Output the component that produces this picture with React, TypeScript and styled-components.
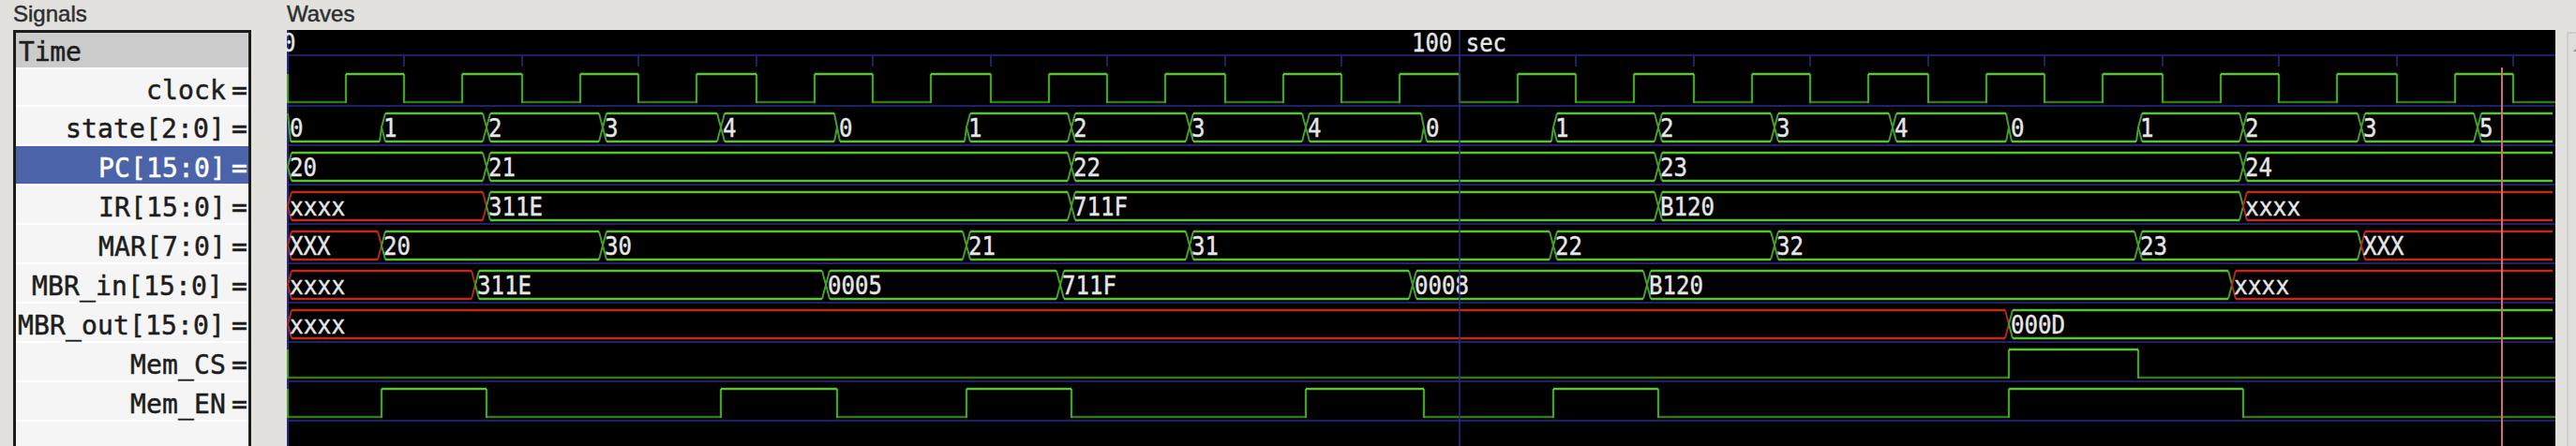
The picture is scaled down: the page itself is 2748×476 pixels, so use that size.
import React from "react";
import styled, { createGlobalStyle } from "styled-components";

const GlobalStyle = createGlobalStyle`
  html, body, #root { margin: 0; height: 100%; }
  body { background: #e2e1dd; overflow: hidden; }
`;

const mono = `"DejaVu Sans Mono", "Liberation Mono", monospace`;

const Viewer = styled.div`
  display: flex;
  width: 2748px;
  height: 476px;
  overflow: hidden;
  background: #e2e1dd;
`;

const Frame = styled.section<{ $width: number; $before: number }>`
  flex: none;
  display: flex;
  flex-direction: column;
  width: ${(p) => p.$width}px;
  margin-left: ${(p) => p.$before}px;
`;

const FrameTitle = styled.h2`
  flex: none;
  margin: 0;
  height: 32px;
  font: 400 24px/30px "Liberation Sans", Arial, sans-serif;
  -webkit-text-stroke: 0.5px #2e2f30;
  color: #2e2f30;
`;

const SignalList = styled.div`
  flex: 1;
  box-sizing: border-box;
  border: solid #1c1c1c;
  border-width: 3px 3px 0;
  background: #f5f5f5;
  overflow: hidden;
`;

const TimeHeader = styled.div`
  box-sizing: border-box;
  height: 39px;
  padding-left: 3px;
  border-bottom: 2px solid #fff;
  background: #cbcbcb;
  font: 28px/42px ${mono};
  letter-spacing: -0.2px;
  -webkit-text-stroke: 0.5px #1d1d1d;
  color: #1d1d1d;
`;

const SignalRow = styled.div<{ $selected?: boolean }>`
  box-sizing: border-box;
  display: flex;
  justify-content: flex-end;
  height: 42px;
  border-bottom: 2px solid #fff;
  background: ${(p) => (p.$selected ? "#4b64a9" : "#f5f5f5")};
  color: ${(p) => (p.$selected ? "#fff" : "#1d1d1d")};
  font: 28px/48px ${mono};
  letter-spacing: 0.15px;
  -webkit-text-stroke: 0.5px currentColor;
  white-space: nowrap;
  &:nth-child(2) {
    height: 40px;
    line-height: 45px;
  }
`;

const SignalName = styled.span<{ $inset?: number }>`
  margin-right: ${(p) => 6 + (p.$inset ?? 0)}px;
`;

const Equals = styled.span`
  flex: none;
  width: 18px;
  overflow: hidden;
`;

const WaveCanvas = styled.svg`
  display: block;
  width: 2420px;
  height: 444px;
  background: #000;
`;

const ValueText = styled.text`
  font: 26px ${mono};
  fill: #e6e6e6;
  stroke: #e6e6e6;
  stroke-width: 0.4px;
`;

const Scroller = styled.div`
  flex: 1;
  box-sizing: border-box;
  margin: 34px 0 0 12px;
  padding: 14px 0 0 5px;
  border: solid #cfceca;
  border-width: 2px 0 0 2px;
  background: #dfdeda;
  overflow: hidden;
`;

const ScrollArrow = styled.svg`
  display: block;
  width: 10px;
  height: 6px;
  fill: #8a8985;
`;

type Change = [number, string];
type Signal =
  | { name: string; kind: "bit"; high: [number, number][]; selected?: boolean; inset?: number }
  | { name: string; kind: "bus"; values: Change[]; selected?: boolean; inset?: number };

const clockHigh = Array.from({ length: 19 }, (_, i): [number, number] => [i * 10 + 5, i * 10 + 10]);

const signals: Signal[] = [
  { name: "clock", kind: "bit", high: clockHigh },
  {
    name: "state[2:0]",
    kind: "bus",
    inset: 1,
    values: [
      [0, "0"], [8, "1"], [17, "2"], [27, "3"], [37, "4"], [47, "0"], [58, "1"], [67, "2"], [77, "3"],
      [87, "4"], [97, "0"], [108, "1"], [117, "2"], [127, "3"], [137, "4"], [147, "0"], [158, "1"],
      [167, "2"], [177, "3"], [187, "5"],
    ],
  },
  { name: "PC[15:0]", kind: "bus", selected: true, values: [[0, "20"], [17, "21"], [67, "22"], [117, "23"], [167, "24"]] },
  { name: "IR[15:0]", kind: "bus", values: [[0, "xxxx"], [17, "311E"], [67, "711F"], [117, "B120"], [167, "xxxx"]] },
  {
    name: "MAR[7:0]",
    kind: "bus",
    values: [[0, "XXX"], [8, "20"], [27, "30"], [58, "21"], [77, "31"], [108, "22"], [127, "32"], [158, "23"], [177, "XXX"]],
  },
  {
    name: "MBR_in[15:0]",
    kind: "bus",
    inset: 3,
    values: [[0, "xxxx"], [16, "311E"], [46, "0005"], [66, "711F"], [96, "0008"], [116, "B120"], [166, "xxxx"]],
  },
  { name: "MBR_out[15:0]", kind: "bus", inset: 1, values: [[0, "xxxx"], [147, "000D"]] },
  { name: "Mem_CS", kind: "bit", high: [[147, 158]] },
  { name: "Mem_EN", kind: "bit", high: [[8, 17], [37, 47], [58, 67], [87, 97], [108, 117], [147, 167]] },
];

const CANVAS_W = 2420;
const BUS_END = 2417;
const GRID = "#20206a";
const GREEN = "#5ac235";
const GREEN_EDGE = "#449f27";
const GREEN_LOW = "#32761d";
const RED = "#c32a1c";

// Simulation time to canvas x, snapped to the 2px grid.
const at = (t: number) => 1 + 2 * Math.floor(6.25 * t);
// Separator line under row i.
const rule = (i: number) => 81 + 42 * i;

function BitWave({ high, row }: { high: [number, number][]; row: number }) {
  const top = rule(row) - 34;
  const low = rule(row) - 4;
  let cursor = 1;
  const lows: string[] = [];
  for (const [a, b] of high) {
    lows.push(`M${cursor} ${low}H${at(a)}`);
    cursor = at(b);
  }
  lows.push(`M${cursor} ${low}H${CANVAS_W}`);
  return (
    <g fill="none" strokeWidth={2.3}>
      <path d={lows.join("")} stroke={GREEN_LOW} />
      <path
        d={`M1 ${top}V${low + 1}` + high.map(([a, b]) => `M${at(a)} ${top}V${low + 1}M${at(b)} ${top}V${low + 1}`).join("")}
        stroke={GREEN_EDGE}
      />
      <path d={high.map(([a, b]) => `M${at(a)} ${top}H${at(b)}`).join("")} stroke={GREEN} />
    </g>
  );
}

const unknown = (v: string) => /^x+$/i.test(v);

function BusWave({ values, row }: { values: Change[]; row: number }) {
  const top = rule(row) - 34;
  const low = rule(row) - 4;
  const mid = (top + low) / 2;
  return (
    <g fill="none" strokeWidth={2.3}>
      {values.map(([t, v], i) => {
        const x0 = at(t);
        const last = i === values.length - 1;
        const x1 = last ? BUS_END : at(values[i + 1][0]);
        const zero = v === "0";
        const color = unknown(v) ? RED : GREEN;
        const edge = unknown(v) ? "#b3271a" : GREEN_EDGE;
        const l = zero ? x0 + 3 : x0 + 4;
        const r = last ? x1 : zero ? x1 - 2 : x1 - 4;
        const topEnd = !last && values[i + 1][1] === "0" ? x1 - 3 : r;
        const rises = zero
          ? `M${x0} ${i === 0 ? top : mid}L${l} ${low}`
          : `M${l} ${top}L${x0} ${mid}L${l} ${low}`;
        const falls = last ? "" : zero ? `M${x1} ${mid}L${r} ${low}` : `M${topEnd} ${top}L${x1} ${mid}L${topEnd} ${low}`;
        return (
          <g key={t}>
            <path d={rises + falls} stroke={edge} strokeWidth={2} />
            <path d={(zero ? "" : `M${l} ${top}H${topEnd}`) + `M${l} ${low}H${topEnd}`} stroke={color} />
            <ValueText
              x={x0 + 2}
              y={low - 4.6}
              textLength={v.length * (v === "xxxx" ? 14.8 : 14.5)}
              lengthAdjust="spacingAndGlyphs"
            >
              {v}
            </ValueText>
          </g>
        );
      })}
    </g>
  );
}

function Waves() {
  return (
    <WaveCanvas viewBox="0 0 2420 444">
      <g fill="none" stroke={GRID} strokeWidth={2}>
        <path d={`M0 27H2420` + signals.map((_, i) => `M0 ${rule(i)}H2420`).join("")} />
        <path d={Array.from({ length: 19 }, (_, i) => `M${at((i + 1) * 10)} 27V39`).join("")} />
        <path d="M1 0V444" stroke="#2a2a86" />
      </g>
      {signals.map((s, i) =>
        s.kind === "bit" ? <BitWave key={s.name} high={s.high} row={i} /> : <BusWave key={s.name} values={s.values} row={i} />
      )}
      <path d={`M${at(100)} 0V444`} stroke="#2a2a86" strokeOpacity={0.75} strokeWidth={2} />
      <ValueText x={-5} y={22.5} textLength={14.5} lengthAdjust="spacingAndGlyphs">0</ValueText>
      <ValueText x={1200} y={22.5} textLength={101} lengthAdjust="spacingAndGlyphs">100 sec</ValueText>
      <path d="M2363 40V444" stroke="#d46e6a" strokeWidth={2} />
    </WaveCanvas>
  );
}

export default function App() {
  return (
    <Viewer>
      <GlobalStyle />
      <Frame $width={254} $before={14}>
        <FrameTitle>Signals</FrameTitle>
        <SignalList>
          <TimeHeader>Time</TimeHeader>
          {signals.map((s) => (
            <SignalRow key={s.name} $selected={s.selected}>
              <SignalName $inset={s.inset}>{s.name}</SignalName>
              <Equals>=</Equals>
            </SignalRow>
          ))}
        </SignalList>
      </Frame>
      <Frame $width={2420} $before={38}>
        <FrameTitle>Waves</FrameTitle>
        <Waves />
      </Frame>
      <Scroller>
        <ScrollArrow viewBox="0 0 10 6">
          <path d="M0 5L5 0L10 5Z" />
        </ScrollArrow>
      </Scroller>
    </Viewer>
  );
}
